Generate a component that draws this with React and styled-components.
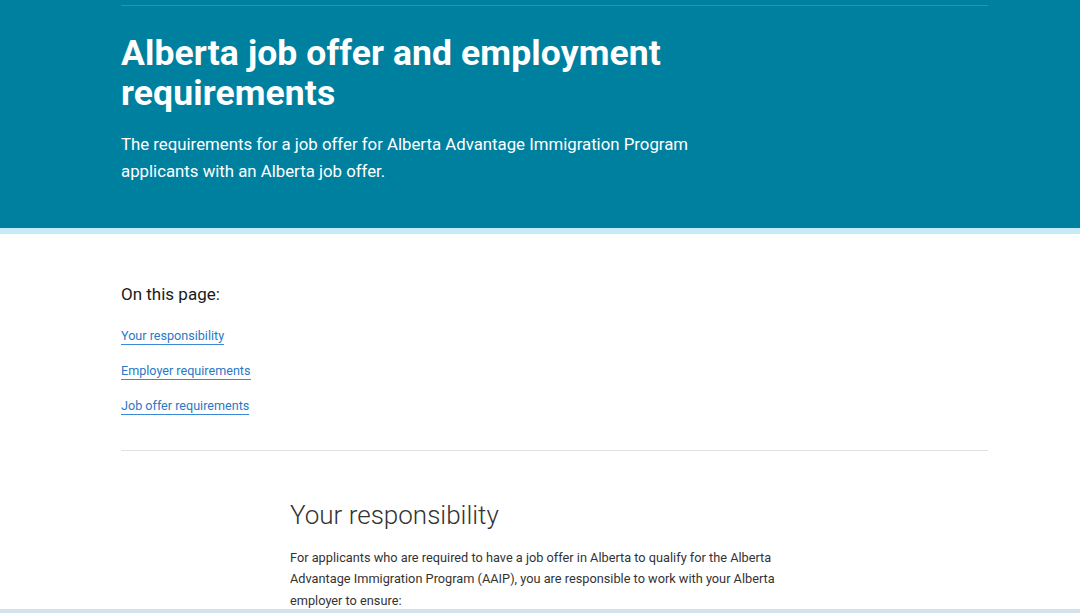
import React from "react";
import styled, { createGlobalStyle } from "styled-components";

const GlobalStyle = createGlobalStyle`
  html, body {
    margin: 0;
    padding: 0;
    background: #fff;
    font-family: Roboto, "Liberation Sans", sans-serif;
    color: #333;
  }
`;

const links = [
  "Your responsibility",
  "Employer requirements",
  "Job offer requirements",
];

const App = () => {
  return (
    <>
      <GlobalStyle />
      <Hero>
        <Container>
          <TopRule />
          <Title>Alberta job offer and employment requirements</Title>
          <Lead>
            The requirements for a job offer for Alberta Advantage Immigration
            Program applicants with an Alberta job offer.
          </Lead>
        </Container>
      </Hero>
      <Stripe />
      <Main>
        <Container>
          <TocHeading>On this page:</TocHeading>
          <TocList>
            {links.map((label) => (
              <li key={label}>
                <TocLink href="#">{label}</TocLink>
              </li>
            ))}
          </TocList>
          <Divider />
          <Section>
            <SectionTitle>Your responsibility</SectionTitle>
            <Paragraph>
              For applicants who are required to have a job offer in Alberta to
              qualify for the Alberta Advantage Immigration Program (AAIP), you
              are responsible to work with your Alberta employer to ensure:
            </Paragraph>
          </Section>
        </Container>
      </Main>
      <Taskbar />
    </>
  );
};

const Hero = styled.header`
  background: #00809f;
  color: #fff;
  height: 228px;
`;

const Container = styled.div`
  width: 867px;
  margin-left: 121px;
`;

const TopRule = styled.div`
  height: 0;
  border-top: 1px solid #2a93ad;
  padding-top: 4px;
  transform: translateY(5px);
`;

const Title = styled.h1`
  margin: 28px 0 0;
  width: 640px;
  font-size: 35.5px;
  line-height: 40px;
  font-weight: 700;
  letter-spacing: 0.1px;
`;

const Lead = styled.p`
  margin: 18px 0 0;
  width: 580px;
  font-size: 16.8px;
  line-height: 27px;
  font-weight: 400;
`;

const Stripe = styled.div`
  height: 6px;
  background: #c5ebf6;
`;

const Main = styled.main`
  padding-top: 49px;
`;

const TocHeading = styled.h2`
  margin: 0;
  font-size: 17px;
  line-height: 22px;
  font-weight: 400;
  color: #1a1a1a;
`;

const TocList = styled.ul`
  list-style: none;
  margin: 20px 0 0;
  padding: 0;
  display: flex;
  flex-direction: column;
  align-items: flex-start;
  gap: 15px;
`;

const TocLink = styled.a`
  display: inline-block;
  font-size: 12.6px;
  line-height: 17px;
  color: #2a78c8;
  text-decoration: none;
  border-bottom: 1px solid #3a88d6;
`;

const Divider = styled.hr`
  margin: 35px 0 0;
  border: 0;
  border-top: 1px solid #e0e0e0;
`;

const Section = styled.section`
  padding-left: 169px;
  padding-top: 48px;
`;

const SectionTitle = styled.h2`
  margin: 0;
  font-size: 26px;
  line-height: 32px;
  font-weight: 300;
  color: #333;
`;

const Paragraph = styled.p`
  margin: 16px 0 0;
  width: 530px;
  font-size: 12.75px;
  line-height: 21.3px;
  color: #333;
`;

const Taskbar = styled.div`
  position: fixed;
  left: 0;
  right: 0;
  bottom: 0;
  height: 4px;
  background: #d3e3ee;
`;

export default App;
